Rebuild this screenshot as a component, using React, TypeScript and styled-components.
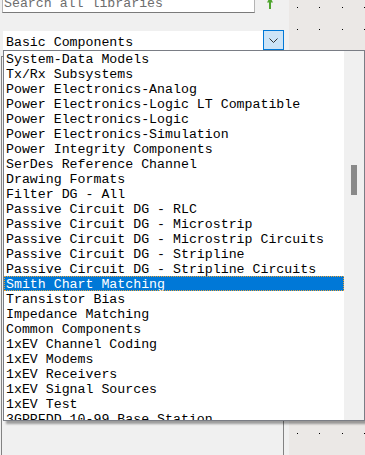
import React from "react";
import styled, { createGlobalStyle } from "styled-components";

const libraries = [
  "System-Data Models",
  "Tx/Rx Subsystems",
  "Power Electronics-Analog",
  "Power Electronics-Logic LT Compatible",
  "Power Electronics-Logic",
  "Power Electronics-Simulation",
  "Power Integrity Components",
  "SerDes Reference Channel",
  "Drawing Formats",
  "Filter DG - All",
  "Passive Circuit DG - RLC",
  "Passive Circuit DG - Microstrip",
  "Passive Circuit DG - Microstrip Circuits",
  "Passive Circuit DG - Stripline",
  "Passive Circuit DG - Stripline Circuits",
  "Smith Chart Matching",
  "Transistor Bias",
  "Impedance Matching",
  "Common Components",
  "1xEV Channel Coding",
  "1xEV Modems",
  "1xEV Receivers",
  "1xEV Signal Sources",
  "1xEV Test",
  "3GPPFDD 10-99 Base Station",
];

const SELECTED = 15;
const GRID = 22.43;

const App: React.FC = () => {
  const dots: { x: number; y: number }[] = [];
  for (let i = 0; i < 4; i++) {
    for (let j = 0; j < 21; j++) {
      dots.push({ x: Math.round(8 + GRID * i), y: Math.round(7 + GRID * j) });
    }
  }

  return (
    <>
      <GlobalStyle />
      <Screen>
        <LeftPanel>
          <SearchRow>
            <SearchBox>Search all libraries</SearchBox>
            <UpArrow width="6" height="9" viewBox="0 0 6 9">
              <polygon points="3,-3 6,2.5 4,2.5 4,9 2,9 2,2.5 0,2.5" fill="#4fa52f" />
            </UpArrow>
          </SearchRow>
          <ComboRow>
            <ComboField>Basic Components</ComboField>
            <ComboButton>
              <svg width="9" height="5" viewBox="0 0 9 5">
                <polyline points="0.5,0.5 4.5,4.5 8.5,0.5" fill="none" stroke="#333" strokeWidth="1" />
              </svg>
            </ComboButton>
          </ComboRow>
          <ComponentPane />
        </LeftPanel>
        <Canvas>
          <svg width="76" height="455" shapeRendering="crispEdges">
            {dots.map((d) => (
              <rect key={`${d.x}-${d.y}`} x={d.x} y={d.y} width="1" height="1" fill="#000" />
            ))}
          </svg>
        </Canvas>
        <DropList>
          <Items>
            {libraries.map((name, i) => (
              <Item key={name} $selected={i === SELECTED}>
                {name}
              </Item>
            ))}
          </Items>
          <ScrollTrack>
            <Thumb />
          </ScrollTrack>
        </DropList>
      </Screen>
    </>
  );
};

const GlobalStyle = createGlobalStyle`
  html, body {
    margin: 0;
    padding: 0;
  }
  body {
    width: 365px;
    height: 455px;
    overflow: hidden;
    background: #f0f0f0;
    font-family: "Liberation Mono", "DejaVu Sans Mono", monospace;
    font-size: 13.25px;
  }
`;

const Screen = styled.div`
  position: relative;
  display: flex;
  height: 455px;
  overflow: hidden;
`;

const LeftPanel = styled.div`
  width: 289px;
  display: flex;
  flex-direction: column;
  background: #f0f0f0;
`;

const SearchRow = styled.div`
  display: flex;
  align-items: flex-start;
  height: 13px;
`;

const SearchBox = styled.div`
  box-sizing: border-box;
  margin: -8px 0 0 2px;
  width: 253px;
  height: 21px;
  padding: 3px 0 0 1px;
  border: 1px solid #b4b4b4;
  border-bottom-color: #7a7a7a;
  background: #fff;
  color: #6d6d6d;
  line-height: 15px;
  white-space: nowrap;
  overflow: hidden;
`;

const UpArrow = styled.svg`
  display: block;
  margin-left: 12px;
`;

const ComboRow = styled.div`
  display: flex;
  margin: 17px 0 0 3px;
  width: 281px;
  height: 20px;
`;

const ComboField = styled.div`
  flex: 1;
  margin-top: 1px;
  padding: 4px 0 0 3px;
  background: #fff;
  color: #000;
  line-height: 15px;
  white-space: nowrap;
  overflow: hidden;
`;

const ComboButton = styled.div`
  box-sizing: border-box;
  width: 21px;
  height: 20px;
  border: 1px solid #0078d7;
  background: #cce4f7;
  display: flex;
  align-items: center;
  justify-content: center;
`;

const ComponentPane = styled.div`
  flex: 1;
  margin: 6px 0 0 1px;
  width: 283px;
  box-sizing: border-box;
  border: 1px solid #828282;
  border-bottom: none;
  background: #f0f0f0;
`;

const Canvas = styled.div`
  flex: 1;
  background: #ebe8e6;
  overflow: hidden;
`;

const DropList = styled.div`
  position: absolute;
  left: 3px;
  top: 50px;
  width: 362px;
  height: 371px;
  box-sizing: border-box;
  display: flex;
  border: 1px solid #7a7d85;
  background: #fff;
  box-shadow: 3px 3px 2px rgba(0, 0, 0, 0.35);
`;

const Items = styled.div`
  flex: 1;
  overflow: hidden;
`;

const Item = styled.div<{ $selected: boolean }>`
  box-sizing: border-box;
  height: 15px;
  padding: 1px 0 0 2px;
  line-height: 15px;
  white-space: nowrap;
  color: ${(p) => (p.$selected ? "#fff" : "#000")};
  background: ${(p) => (p.$selected ? "#0078d7" : "transparent")};
  outline: ${(p) => (p.$selected ? "1px dotted #e8a33b" : "none")};
  outline-offset: -1px;
`;

const ScrollTrack = styled.div`
  width: 20px;
  background: #f0f0f0;
  padding: 114px 0 0 7px;
  box-sizing: border-box;
`;

const Thumb = styled.div`
  width: 6px;
  height: 30px;
  background: #8a8a8a;
`;

export default App;
